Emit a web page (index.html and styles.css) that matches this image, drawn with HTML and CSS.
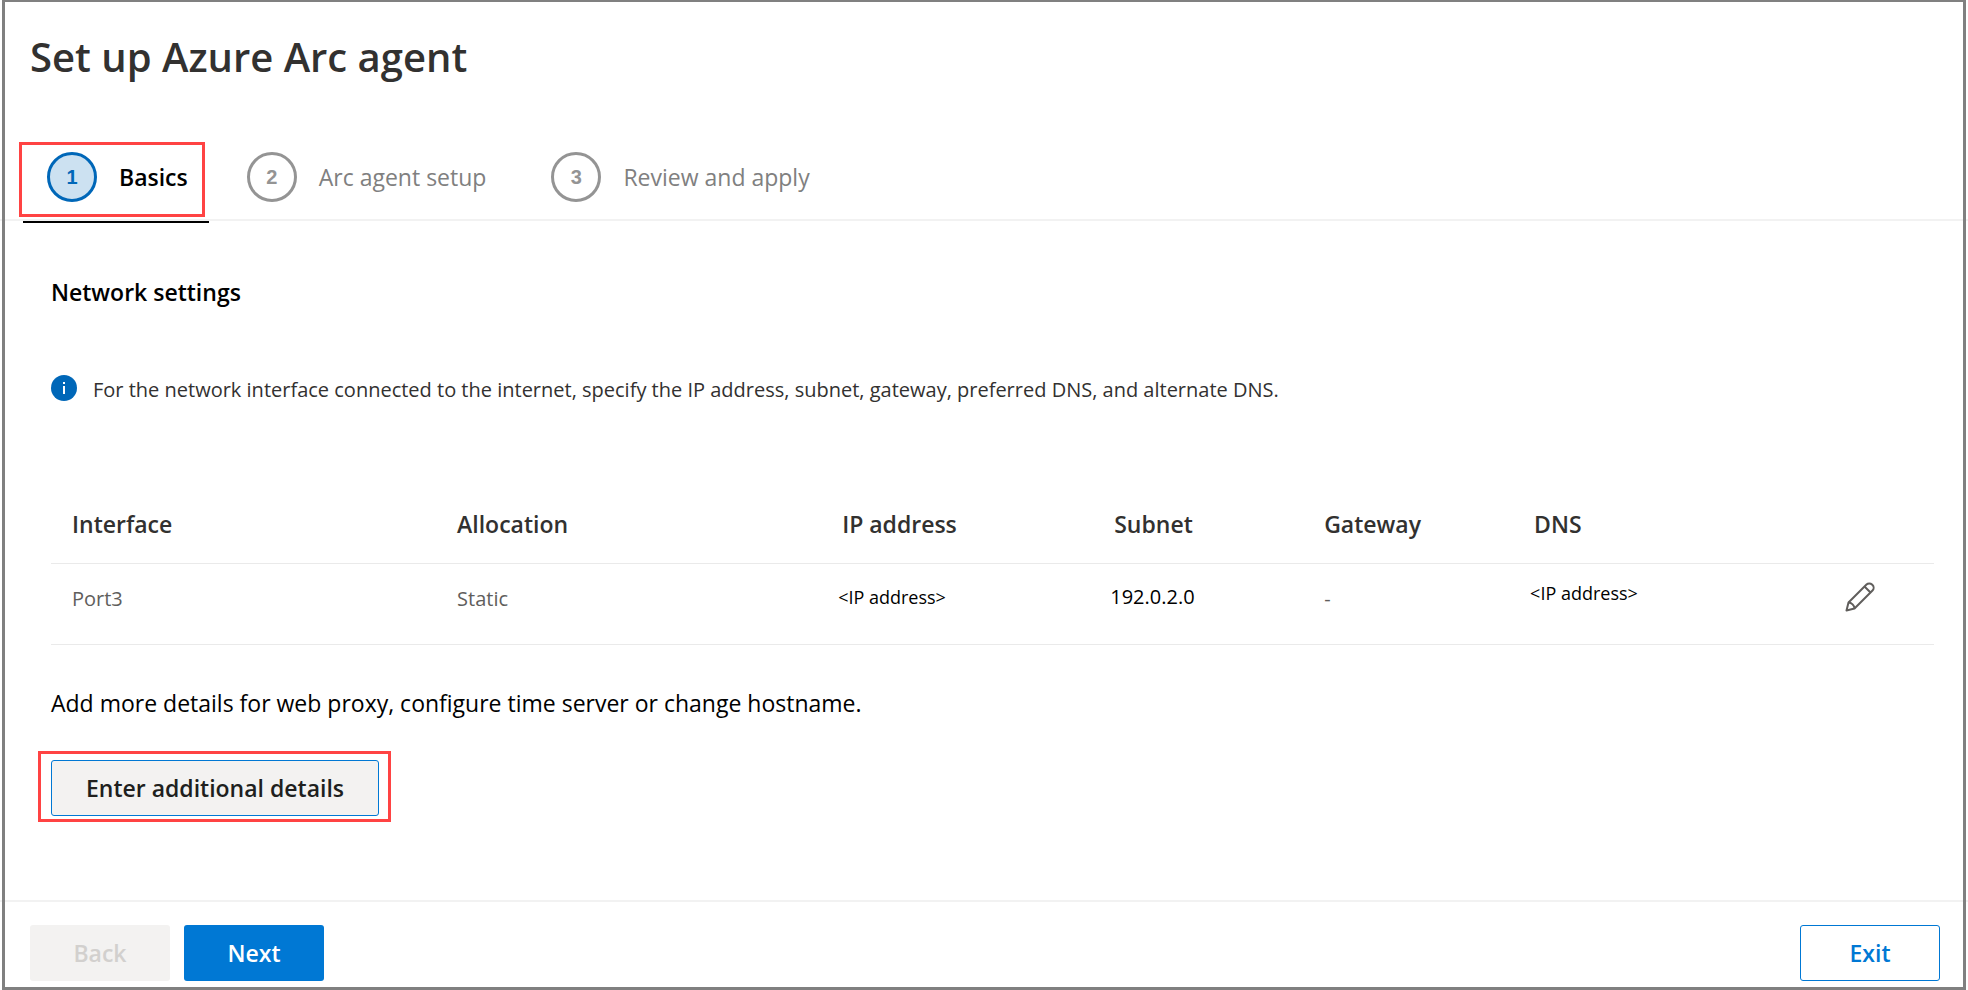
FILE: index.html
```html
<!DOCTYPE html>
<html lang="en">
<head>
<meta charset="utf-8">
<title>Set up Azure Arc agent</title>
<link rel="stylesheet" href="styles.css">
</head>
<body>
<div class="wizard">
  <header class="header">
    <h1 class="title">Set up Azure Arc agent</h1>
  </header>
  <nav class="steps" aria-label="Setup steps">
    <button class="step step-active" type="button" aria-current="step"><span class="num">1</span><span class="label">Basics</span></button>
    <button class="step" type="button"><span class="num">2</span><span class="label">Arc agent setup</span></button>
    <button class="step" type="button"><span class="num">3</span><span class="label">Review and apply</span></button>
  </nav>
  <main class="content">
    <h2 class="section-title">Network settings</h2>
    <div class="info">
      <svg class="info-icon" viewBox="0 0 26 26" aria-hidden="true">
        <circle cx="13" cy="13" r="13" fill="#0067b8"/>
        <rect x="12" y="11" width="2" height="8" fill="#fff"/>
        <rect x="12" y="7" width="2" height="2" fill="#fff"/>
      </svg>
      <p class="info-text">For the network interface connected to the internet, specify the IP address, subnet, gateway, preferred DNS, and alternate DNS.</p>
    </div>
    <table class="interfaces">
      <colgroup>
        <col class="col-wide"><col class="col-wide"><col class="col-ip"><col class="col-mid"><col class="col-mid"><col class="col-mid"><col>
      </colgroup>
      <thead>
        <tr><th scope="col">Interface</th><th scope="col">Allocation</th><th scope="col">IP address</th><th scope="col">Subnet</th><th scope="col">Gateway</th><th scope="col">DNS</th><td></td></tr>
      </thead>
      <tbody>
        <tr>
          <td>Port3</td>
          <td>Static</td>
          <td class="value address">&lt;IP address&gt;</td>
          <td class="value">192.0.2.0</td>
          <td>-</td>
          <td class="value address raised">&lt;IP address&gt;</td>
          <td class="action">
            <button class="edit" type="button" aria-label="Edit Port3">
              <svg viewBox="0 0 30 30" fill="none" stroke="#605e5c" stroke-width="2" stroke-linejoin="round" aria-hidden="true">
                <path d="M1.5 28.5 L3.5 20.5 L21.5 2.5 C23 1 25.500 1 27 2.500 L27.500 3 C29 4.500 29 7 27.500 8.500 L9.500 26.500 Z"/>
                <path d="M19.500 4.500 L25.500 10.500 M3.500 20.500 C6.500 20.500 9.500 23.500 9.500 26.500"/>
              </svg>
            </button>
          </td>
        </tr>
      </tbody>
    </table>
    <p class="more">Add more details for web proxy, configure time server or change hostname.</p>
    <div class="callout">
      <button class="btn btn-details" type="button">Enter additional details</button>
    </div>
  </main>
  <footer class="footer">
    <button class="btn btn-back" type="button" disabled>Back</button>
    <button class="btn btn-next" type="button">Next</button>
    <button class="btn btn-exit" type="button">Exit</button>
  </footer>
</div>
</body>
</html>
```
FILE: styles.css
```css
* {
  box-sizing: border-box;
}

body {
  margin: 0;
  background: #fff;
  color: #000;
  font-family: "Segoe UI", "Open Sans", "Noto Sans", sans-serif;
  font-size: 23px;
  line-height: 32px;
}

h1, h2, p {
  margin: 0;
}

button {
  font: inherit;
  cursor: pointer;
}

.wizard {
  position: relative;
  display: flex;
  flex-direction: column;
  min-height: 100vh;
}

.wizard::after {
  content: "";
  position: absolute;
  inset: 0 2px 0 2px;
  border: 3px solid #808080;
  border-top-width: 2px;
  pointer-events: none;
}

.header {
  padding: 29px 30px 57px;
}

.title {
  color: #323130;
  font-size: 40px;
  font-weight: 600;
  line-height: 56px;
}

.steps {
  display: flex;
  gap: 14px;
  padding-left: 23px;
  border-bottom: 2px solid #f2f2f2;
}

.step {
  position: relative;
  display: flex;
  align-items: center;
  gap: 22px;
  height: 77px;
  padding: 0 27px 7px 24px;
  border: 0;
  background: none;
  color: #808080;
}

.num {
  display: grid;
  place-items: center;
  width: 50px;
  height: 50px;
  border: 3px solid #949494;
  border-radius: 50%;
  color: #949494;
  font-family: "Liberation Sans", Arial, sans-serif;
  font-size: 20px;
  font-weight: 700;
}

.step-active {
  padding-right: 21px;
  color: #000;
  font-weight: 600;
}

.step-active .num {
  border-color: #0067b8;
  background: #cce1f1;
  color: #0067b8;
}

.step-active::before {
  content: "";
  position: absolute;
  inset: 0 4px 2px -4px;
  border: 3px solid #ff4343;
}

.step-active::after {
  content: "";
  position: absolute;
  inset: auto 0 -4px 0;
  height: 2px;
  background: #000;
}

.content {
  flex: 1;
  padding: 55px 34px 40px 51px;
}

.section-title {
  font-size: 23px;
  font-weight: 600;
}

.info {
  display: flex;
  align-items: center;
  gap: 16px;
  margin-top: 66px;
}

.info-icon {
  width: 26px;
  height: 26px;
  margin-bottom: 4px;
}

.info-text {
  color: #323130;
  font-size: 20px;
}

.interfaces {
  width: 100%;
  margin-top: 79px;
  border-collapse: collapse;
  table-layout: fixed;
}

.interfaces th,
.interfaces td {
  padding: 0 0 0 21px;
  border-bottom: 1px solid #eaeaea;
  text-align: left;
}

.interfaces th {
  height: 78px;
  color: #323130;
  font-weight: 600;
}

.interfaces td {
  height: 81px;
  padding-bottom: 10px;
  color: #605e5c;
  font-size: 20px;
}

.interfaces thead td {
  height: 78px;
}

.interfaces .value {
  padding-left: 17px;
  padding-bottom: 14px;
  color: #000;
}

.interfaces .address {
  font-size: 18px;
}

.interfaces .raised {
  padding-bottom: 22px;
}

.col-wide {
  width: 20.45%;
}

.col-ip {
  width: 14.45%;
}

.col-mid {
  width: 11.15%;
}

.interfaces .action {
  padding: 0 59px 4px 0;
  text-align: right;
}

.edit {
  display: inline-flex;
  padding: 0;
  border: 0;
  background: none;
}

.edit svg {
  width: 30px;
  height: 30px;
}

.more {
  margin-top: 42px;
}

.callout {
  width: fit-content;
  margin: 32px 0 0 -13px;
  padding: 6px 9px 3px 10px;
  border: 3px solid #ff4343;
}

.btn {
  min-width: 140px;
  height: 56px;
  padding: 0 24px;
  border: 1px solid transparent;
  border-radius: 3px;
  font-weight: 600;
}

.btn-details {
  min-width: 328px;
  border-color: #0078d4;
  background: #f3f2f1;
  color: #201f1e;
}

.footer {
  display: flex;
  gap: 14px;
  padding: 23px 28px 9px 30px;
  border-top: 2px solid #f2f2f2;
}

.btn-back {
  background: #f3f2f1;
  color: #d2d0ce;
  cursor: default;
}

.btn-next {
  background: #0078d4;
  color: #fff;
}

.btn-exit {
  margin-left: auto;
  border-color: #0078d4;
  background: #fff;
  color: #0078d4;
}
```
